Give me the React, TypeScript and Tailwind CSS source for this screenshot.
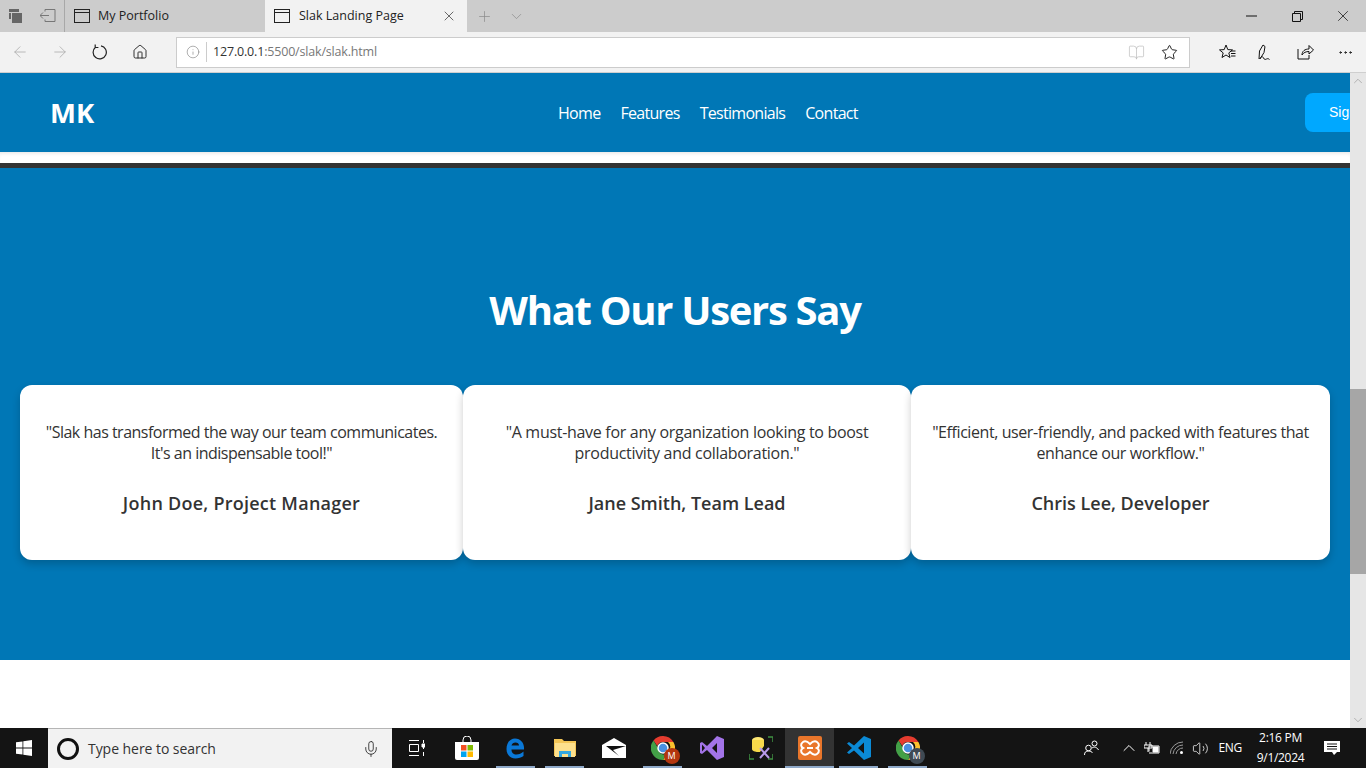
import { ArrowLeft, ArrowRight, BookOpen, ChevronDown, ChevronUp, Home, Info, Mic, MoreHorizontal, Plus, Star, Volume2, X } from "lucide-react";
import type { ReactNode } from "react";

const font = "font-['Open_Sans',sans-serif]";

const testimonials = [
  { quote: ['"Slak has transformed the way our team communicates.', "It's an indispensable tool!\""], name: "John Doe, Project Manager", track: "tracking-[-0.5px]", nameTrack: "tracking-[0.25px]" },
  { quote: ['"A must-have for any organization looking to boost', 'productivity and collaboration."'], name: "Jane Smith, Team Lead", track: "tracking-[-0.3px]", nameTrack: "tracking-[0px]" },
  { quote: ['"Efficient, user-friendly, and packed with features that', 'enhance our workflow."'], name: "Chris Lee, Developer", track: "tracking-[-0.42px]", nameTrack: "tracking-[0px]" },
];

function TabIcon() {
  return (
    <svg width="16" height="14" viewBox="0 0 16 14" fill="none" stroke="#222" className="shrink-0">
      <rect x="0.5" y="0.5" width="15" height="13" />
      <path d="M1 3.5h14" />
    </svg>
  );
}

function TitleBar() {
  return (
    <div className="flex h-8 bg-[#cccccc] text-[12.5px] text-[#222]">
      <div className="flex w-[65px] items-center border-r border-[#a8a8a8]">
        <svg width="16" height="16" viewBox="0 0 16 16" className="ml-[8px]" fill="#666">
          <path d="M1 1h10v3H1zM4 5h10v10H4z" />
          <path d="M1 5h2v6H1z" />
        </svg>
        <svg width="16" height="14" viewBox="0 0 16 14" fill="none" stroke="#777" className="ml-[16px]">
          <path d="M5 2.5V.5h10v12H5v-2M0 6.5h9M3 3.5l-3 3 3 3" />
        </svg>
      </div>
      <div className="flex w-[200px] items-center gap-[8px] pl-[9px]">
        <TabIcon />
        <span>My Portfolio</span>
      </div>
      <div className="flex w-[202px] items-center bg-[#f2f2f2] pl-[9px]">
        <TabIcon />
        <span className="ml-[9px] w-[142px]">Slak Landing Page</span>
        <X size={16} strokeWidth={1} className="text-[#222]" />
      </div>
      <div className="flex items-center pl-[9px] text-[#8a8a8a]">
        <Plus size={17} strokeWidth={1} />
        <ChevronDown size={17} strokeWidth={1} className="ml-[15px]" />
      </div>
      <div className="ml-auto flex items-center text-[#111]">
        <div className="flex w-[46px] justify-center">
          <svg width="11" height="2" viewBox="0 0 11 2" stroke="#111"><path d="M0 1h11" /></svg>
        </div>
        <div className="flex w-[46px] justify-center">
          <svg width="11" height="11" viewBox="0 0 11 11" fill="none" stroke="#111">
            <path d="M.5 2.5h8v8h-8zM2.5 2.5v-2h8v8h-2" />
          </svg>
        </div>
        <div className="flex w-[46px] justify-center"><X size={18} strokeWidth={1} /></div>
      </div>
    </div>
  );
}

function AddressBar() {
  return (
    <div className="flex h-[41px] items-center border-b border-[#cfcfcf] bg-[#f2f2f2]">
      <div className="flex w-[176px] items-center text-[#222]">
        <ArrowLeft size={18} strokeWidth={1} className="ml-[11px] text-[#a5a5a5]" />
        <ArrowRight size={18} strokeWidth={1} className="ml-[22px] text-[#a5a5a5]" />
        <svg width="16" height="16" viewBox="0 0 16 16" fill="none" stroke="#222" strokeWidth="1.2" className="ml-[23px]">
          <path d="M9 1.800A6.600 6.600 0 1 1 3.500 3.200M3.200 .5v3h3.200" />
        </svg>
        <Home size={16} strokeWidth={1.4} className="ml-[24px]" />
      </div>
      <div className="flex h-[31px] w-[1014px] items-center border border-[#cccccc] bg-white text-[12.5px]">
        <Info size={14} strokeWidth={1} className="ml-[9px] text-[#777]" />
        <span className="ml-[6px] h-[20px] border-l border-[#ccc]" />
        <span className="ml-[6px] tracking-[-0.18px] text-[#333]">127.0.0.1<span className="text-[#777]">:5500/slak/slak.html</span></span>
        <BookOpen size={17} strokeWidth={1} className="ml-auto text-[#bdbdbd]" />
        <Star size={17} strokeWidth={1.3} className="ml-[16px] mr-[11px] text-[#111]" />
      </div>
      <div className="flex flex-1 items-center text-[#111]">
        <svg width="17" height="16" viewBox="0 0 17 16" fill="none" stroke="#111" className="ml-[29px]">
          <path d="M7 1l1.800 4.600 4.700.3-3.700 3 1.200 4.600L7 11l-4 2.500 1.200-4.600-3.700-3 4.700-.3zM12 7h4.500M12 9.500h4.500M12 12h4.500" />
        </svg>
        <svg width="17" height="17" viewBox="0 0 17 17" fill="none" stroke="#111" className="ml-[22px]">
          <path d="M1 15l.500-8L5 1l2 1.500-1 6-4 6.500M1.500 15c2-3 3-3 4-1s2 1.500 3 1 2-.5 3 .5" />
        </svg>
        <svg width="17" height="16" viewBox="0 0 17 16" fill="none" stroke="#111" className="ml-[22px]">
          <path d="M1 5v10h11v-4M5 11c0-4 3-6 7-6V1.500L16.500 6 12 10V7.500C9 7.500 6.500 8.500 5 11z" />
        </svg>
        <MoreHorizontal size={17} strokeWidth={1.4} className="ml-[23px]" />
      </div>
    </div>
  );
}

function SiteNav() {
  return (
    <header className="flex h-[79px] items-center overflow-hidden bg-[#0077b6] pl-[50px] text-white">
      <div className="w-[508px] shrink-0 text-[27.5px] font-bold leading-none">MK</div>
      <nav className="flex w-[747px] shrink-0 gap-5 text-[16px] tracking-[-0.7px]">
        <a>Home</a>
        <a>Features</a>
        <a>Testimonials</a>
        <a>Contact</a>
      </nav>
      <button className="flex h-[39px] w-[120px] shrink-0 items-center rounded-lg bg-[#00a8ff] pl-6 text-[14px] font-['Liberation_Sans',sans-serif] text-white">Sign Up</button>
    </header>
  );
}

function Testimonials() {
  return (
    <section className="bg-[#0077b6] px-5 pb-[100px] pt-[115px]">
      <h2 className="mb-[48px] text-center text-[40px] font-bold leading-[54px] tracking-[-1.3px] text-white">What Our Users Say</h2>
      <div className="grid grid-cols-[443px_448px_419px]">
        {testimonials.map((t) => (
          <div key={t.name} className="rounded-xl bg-white pb-[45px] pt-[37px] text-center text-[#333] shadow-[0_4px_8px_rgba(0,0,0,0.2)]">
            <p className={`text-[16px] leading-[21px] ${t.track}`}>
              {t.quote[0]}
              <br />
              {t.quote[1]}
            </p>
            <h3 className={`mt-[27px] text-[18px] font-semibold leading-6 ${t.nameTrack}`}>{t.name}</h3>
          </div>
        ))}
      </div>
    </section>
  );
}

function Scrollbar() {
  return (
    <div className="flex w-4 shrink-0 flex-col items-center bg-[#e6e6e6] text-[#8c8c8c]">
      <ChevronUp size={14} strokeWidth={1} className="mt-[1px]" />
      <div className="mt-[301px] h-[185px] w-full bg-[#a6a6a6]" />
      <ChevronDown size={14} strokeWidth={1} className="mt-auto mb-[1px]" />
    </div>
  );
}

function TaskIcon({ children, open, active }: { children: ReactNode; open?: boolean; active?: boolean }) {
  return (
    <div className={`relative flex h-10 w-[49px] shrink-0 items-center justify-center ${active ? "bg-[#333333]" : ""}`}>
      {children}
      {open && <span className={`absolute bottom-0 h-[2px] bg-[#8fa9c9] ${active ? "inset-x-0" : "inset-x-[5px]"}`} />}
    </div>
  );
}

function ChromeIcon({ badge, letterBg }: { badge: string; letterBg: string }) {
  return (
    <div className="relative h-6 w-6">
      <svg width="24" height="24" viewBox="0 0 24 24">
        <path d="M12 0a12 12 0 0 1 10.400 6H12a6 6 0 0 0-5.700 4L2.500 4.500A12 12 0 0 1 12 0z" fill="#e53c2f" />
        <path d="M22.400 6A12 12 0 0 1 12 24l5-8.500A6 6 0 0 0 17 6z" fill="#fbc02d" />
        <path d="M2.500 4.500l5 8.500a5 5 0 0 0 9.500 2.500L12 24A12 12 0 0 1 2.500 4.500z" fill="#43a047" />
        <circle cx="12" cy="12" r="5" fill="#4a90e2" stroke="#fff" strokeWidth="1.500" />
      </svg>
      <span className={`absolute -bottom-[4px] -right-[5px] flex h-[16px] w-[16px] items-center justify-center rounded-full text-[9px] text-white ${letterBg}`}>{badge}</span>
    </div>
  );
}

function Taskbar() {
  return (
    <div className="flex h-10 items-center bg-[#141414]">
      <div className="flex w-12 justify-center">
        <svg width="16" height="16" viewBox="0 0 16 16" fill="#fff">
          <path d="M0 2.300l6.500-.9v6.200H0zM7.300 1.300L16 0v7.600H7.300zM0 8.400h6.500v6.200L0 13.700zM7.300 8.400H16V16l-8.700-1.300z" />
        </svg>
      </div>
      <div className="flex h-10 w-[344px] items-center border-t border-[#b5b5b5] bg-[#f2f2f2]">
        <span className="ml-[9px] h-[22px] w-[22px] rounded-full border-[3px] border-[#111]" />
        <span className="ml-[9px] text-[14px] tracking-[-0.05px] text-[#333]">Type here to search</span>
        <Mic size={18} strokeWidth={1.1} className="ml-auto mr-[12px] text-[#222]" />
      </div>
      <TaskIcon>
        <svg width="16" height="16" viewBox="0 0 16 16" fill="none" stroke="#fff">
          <path d="M0 .5h10M.5 4.500h9v7h-9zM0 15.500h10M14.500 0v3M14.500 6v3M14.500 12v4" />
          <path d="M13 4h3v3h-3z" fill="#fff" />
        </svg>
      </TaskIcon>
      <span className="w-px shrink-0" />
      <TaskIcon>
        <svg width="24" height="24" viewBox="0 0 24 24">
          <path d="M8 7V4a4 4 0 0 1 8 0v3" fill="none" stroke="#fff" />
          <path d="M0 6h24v16a2 2 0 0 1-2 2H2a2 2 0 0 1-2-2z" fill="#fff" />
          <path d="M6 9h5.500v5.500H6z" fill="#f25022" />
          <path d="M12.500 9H18v5.500h-5.500z" fill="#7fba00" />
          <path d="M6 15.500h5.500V21H6z" fill="#00a4ef" />
          <path d="M12.500 15.500H18V21h-5.500z" fill="#ffb900" />
        </svg>
      </TaskIcon>
      <TaskIcon open>
        <svg width="22" height="24" viewBox="0 0 22 24" fill="none">
          <path d="M2 13.500h17c.5-6-3-11-9-11C5 2.500 1.500 7 1.500 13c0 6 4 9.500 9 9.500 3 0 6-1 8-2.500v-4.500c-2 2-4.500 3-7 3-3 0-5-1.500-5-5M6.500 9.500c.5-2 2-3 4-3s3.500 1 3.500 3z" fill="#0a78d7" fillRule="evenodd" />
        </svg>
      </TaskIcon>
      <TaskIcon open>
        <svg width="22" height="20" viewBox="0 0 22 20">
          <path d="M0 1h8l2 2h12v15H0z" fill="#f4c656" />
          <path d="M1 5h20v14H1z" fill="#fde08d" />
          <path d="M5 19v-6h12v6h-3v-3H8v3z" fill="#35a8e0" />
        </svg>
      </TaskIcon>
      <TaskIcon>
        <svg width="24" height="20" viewBox="0 0 24 20">
          <path d="M0 7l12-7 12 7v13H0z" fill="#fff" />
          <path d="M4 8h20l-13 4 6 6z" fill="#111" />
        </svg>
      </TaskIcon>
      <TaskIcon open>
        <ChromeIcon badge="M" letterBg="bg-[#b3360f]" />
      </TaskIcon>
      <TaskIcon>
        <svg width="24" height="24" viewBox="0 0 24 24">
          <path d="M17 0l7 3v18l-7 3-10-10-5 4-2-1V7l2-1 5 4zM17 7l-5 5 5 5z" fill="#a374e8" fillRule="evenodd" />
          <path d="M2 8.500v7l3-3.500z" fill="#141414" />
        </svg>
      </TaskIcon>
      <TaskIcon>
        <svg width="24" height="24" viewBox="0 0 24 24" fill="none">
          <ellipse cx="9" cy="4" rx="6" ry="3" fill="#ffe873" />
          <path d="M3 4v9c0 2 3 3 6 3h2l4-6V4z" fill="#f7d84a" />
          <path d="M0 18v5h5M19 1h5v5M19 23h5v-5" stroke="#3f9142" strokeWidth="1.500" />
          <path d="M11 22l9-10M20 22l-9-10" stroke="#b79be8" strokeWidth="2" />
        </svg>
      </TaskIcon>
      <TaskIcon open active>
        <svg width="24" height="24" viewBox="0 0 24 24" fill="none">
          <rect width="24" height="24" rx="2" fill="#e9762b" />
          <path d="M5 6c3-2 5 0 7 2 2-2 4-4 7-2s2 5 0 6c2 1 3 4 0 6s-5 0-7-2c-2 2-4 4-7 2s-2-5 0-6c-2-1-3-4 0-6z" stroke="#fff" strokeWidth="2" />
          <path d="M9 12h6" stroke="#fff" strokeWidth="2" />
        </svg>
      </TaskIcon>
      <TaskIcon open>
        <svg width="24" height="24" viewBox="0 0 24 24">
          <path d="M17 0l7 3v18l-7 3-10-9.500L2 18l-2-1.500L5 12 0 7.500 2 6l5 3.500zM17 6.500L11 12l6 5.500z" fill="#0b8ad6" fillRule="evenodd" />
        </svg>
      </TaskIcon>
      <TaskIcon open>
        <ChromeIcon badge="M" letterBg="bg-[#3f4a54]" />
      </TaskIcon>
      <div className="ml-auto flex items-center text-white">
        <svg width="15" height="16" viewBox="0 0 15 16" fill="none" stroke="#fff" className="mr-[20px]">
          <circle cx="4.500" cy="8" r="2.800" /><path d="M.5 15c0-3 1.500-4 4-4s3.500 1 4 2" /><circle cx="10.500" cy="3.500" r="2.500" /><path d="M8 8c2-1.500 5-1 6.500 2" />
        </svg>
        <ChevronUp size={20} strokeWidth={1.2} className="mr-[5px]" />
        <svg width="16" height="13" viewBox="0 0 16 13" fill="none" stroke="#fff" className="mr-[10px]">
          <path d="M2 0v3M6 0v3M0 3h8v3H0zM4 6v4M5 9.500V4h10v7H5" /><path d="M9 5h5v5H9z" fill="#fff" />
        </svg>
        <svg width="14" height="14" viewBox="0 0 14 14" fill="none" stroke="#9a9a9a" className="mr-[8px]">
          <path d="M0 13A13 13 0 0 1 13 1M3 13A10 10 0 0 1 13 4M6 13a7 7 0 0 1 7-6" /><circle cx="11.500" cy="11.500" r="1.500" fill="#fff" stroke="none" />
        </svg>
        <Volume2 size={17} strokeWidth={1.1} className="mr-[9px]" />
        <span className="mr-[15px] text-[12px] tracking-[-0.3px]">ENG</span>
        <div className="mr-[20px] flex w-[47px] flex-col items-center text-[12px] leading-[20px] tracking-[-0.3px]">
          <span>2:16 PM</span>
          <span>9/1/2024</span>
        </div>
        <svg width="16" height="15" viewBox="0 0 16 15" className="mr-[26px]">
          <path d="M0 0h16v11h-3l-3 3-2-3H0z" fill="#fff" />
          <path d="M3 3h10M3 5.500h10M3 8h10" stroke="#141414" />
        </svg>
      </div>
    </div>
  );
}

export default function App() {
  return (
    <div className={`flex h-[768px] w-[1366px] flex-col overflow-hidden bg-white ${font}`}>
      <TitleBar />
      <AddressBar />
      <div className="flex h-[655px] overflow-hidden">
        <main className="min-w-0 flex-1">
          <SiteNav />
          <div className="h-[11px] bg-white shadow-[inset_0_4px_4px_-3px_rgba(0,0,0,0.12)]" />
          <div className="h-[5px] bg-[#333333]" />
          <Testimonials />
        </main>
        <Scrollbar />
      </div>
      <Taskbar />
    </div>
  );
}
